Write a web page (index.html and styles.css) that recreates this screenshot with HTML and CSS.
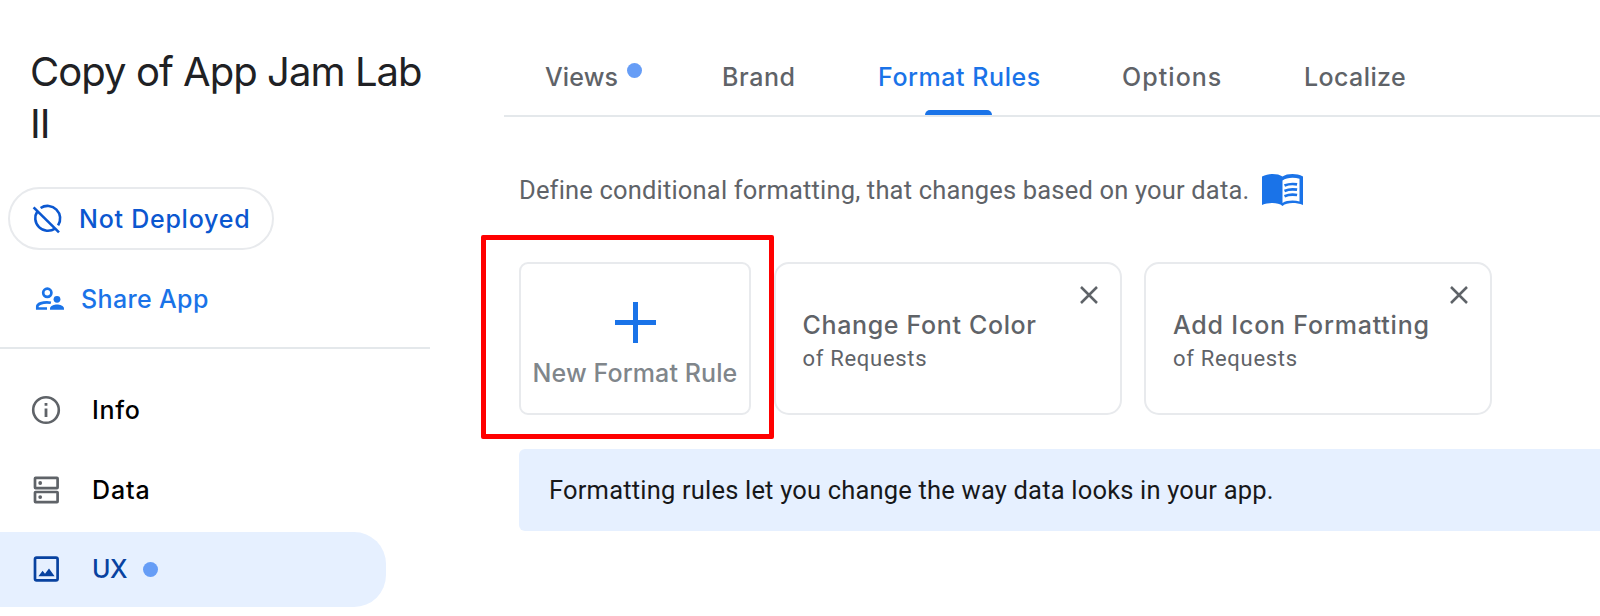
FILE: index.html
```html
<!DOCTYPE html>
<html lang="en">
<head>
<meta charset="utf-8">
<title>Copy of App Jam Lab II</title>
<link rel="stylesheet" href="styles.css">
</head>
<body>
<div class="app">
  <aside class="sidebar">
    <h1 class="app-title">Copy of App Jam Lab II</h1>
    <div class="pill">
      <svg class="icon" viewBox="0 0 34 34" fill="none" stroke="currentColor" stroke-width="2.6">
        <path d="M3.6 5.4 29 30.4"/>
        <path d="M10.6 6A12.6 12.6 0 0 1 28.1 23.4"/>
        <path d="M7.4 9.2A12.6 12.6 0 0 0 25 26.6"/>
      </svg>
      <span class="t-pill">Not Deployed</span>
    </div>
    <div class="share">
      <svg class="icon" viewBox="0 0 34 34" fill="currentColor">
        <circle cx="17.3" cy="10.8" r="4.1" fill="none" stroke="currentColor" stroke-width="2.7"/>
        <path d="M17 26.5H7.3v-2c0-2.7 5.6-4.2 9.6-4.2 1.4 0 2.7.2 4 .5" fill="none" stroke="currentColor" stroke-width="2.7"/>
        <circle cx="27" cy="17.3" r="3.4"/>
        <path d="M20 27.8v-1.400c0-2.700 4.400-3.900 7-3.900s7 1.200 7 3.900v1.400z"/>
      </svg>
      <span class="t-share">Share App</span>
    </div>
    <nav class="nav">
      <div class="nav-item">
        <svg class="icon" viewBox="0 0 34 34" fill="none" stroke="currentColor">
          <circle cx="17" cy="17" r="12.8" stroke-width="2.6"/>
          <path d="M17 15.6V24M17 10v2.8" stroke-width="2.8"/>
        </svg>
        <span class="t-info">Info</span>
      </div>
      <div class="nav-item">
        <svg class="icon" viewBox="0 0 34 34" fill="none" stroke="currentColor" stroke-width="2.7">
          <rect x="6" y="4.9" width="22.6" height="10.2" rx=".6"/>
          <rect x="6" y="19" width="22.6" height="10.2" rx=".6"/>
          <circle cx="11.2" cy="10" r="1.9" fill="currentColor" stroke="none"/>
          <circle cx="11.2" cy="24.1" r="1.9" fill="currentColor" stroke="none"/>
        </svg>
        <span class="t-data">Data</span>
      </div>
      <div class="nav-item active">
        <svg class="icon" viewBox="0 0 34 34">
          <rect x="6" y="5.7" width="22.6" height="22.6" rx="1.6" fill="none" stroke="currentColor" stroke-width="2.7"/>
          <path d="M9.4 24.2l4.200-5.400 2.400 3 4-5.200 5.600 7.600z" fill="currentColor"/>
        </svg>
        <span class="t-ux">UX</span>
        <i class="dot"></i>
      </div>
    </nav>
  </aside>
  <main class="main">
    <div class="tabs">
      <div class="tab"><span class="t-views">Views</span><i class="dot raised"></i></div>
      <div class="tab"><span class="t-brand">Brand</span></div>
      <div class="tab selected"><span class="t-format">Format Rules</span></div>
      <div class="tab"><span class="t-options">Options</span></div>
      <div class="tab"><span class="t-localize">Localize</span></div>
    </div>
    <div class="content">
      <div class="intro">
        <span>Define conditional formatting, that changes based on your data.</span>
        <svg class="book" viewBox="0 0 41 32">
          <path fill="currentColor" d="M0 2.5C3.5.7 7 0 10.500 0c4 0 7.600.8 10 2.600C23 .8 26.500 0 30.500 0 34 0 37.500.7 41 2.500V31c-3.500-1.300-7-1.900-10.500-1.900-4 0-7.500.9-10 2.900-2.400-2-6-2.900-10-2.900C7 29.100 3.500 29.700 0 31z"/>
          <path fill="#fff" d="M20.500 6.600c2.500-1.900 6-2.800 10-2.800 2.500 0 4.900.3 7 1v22.700c-2.100-.6-4.500-.9-7-.9-4 0-7.500.7-10 2.300z"/>
          <path fill="none" stroke="currentColor" stroke-width="2.700" d="M22.500 11.600c3.500-1.500 8-2 12.600-1.200M22.500 16.900c3.500-1.500 8-2 12.600-1.200M22.500 22.200c3.500-1.500 8-2 12.600-1.200"/>
        </svg>
      </div>
      <div class="cards">
        <div class="new-card">
          <svg class="plus" viewBox="0 0 41 41"><path d="M20.500 0v41M0 20.500h41" stroke="currentColor" stroke-width="5"/></svg>
          <span class="t-new">New Format Rule</span>
        </div>
        <div class="rule-card">
          <div class="rule-name t-change">Change Font Color</div>
          <div class="rule-table">of Requests</div>
          <svg class="close" viewBox="0 0 18 18"><path d="M1 1l16 16M17 1 1 17" stroke="currentColor" stroke-width="2.500"/></svg>
        </div>
        <div class="rule-card">
          <div class="rule-name t-add">Add Icon Formatting</div>
          <div class="rule-table">of Requests</div>
          <svg class="close" viewBox="0 0 18 18"><path d="M1 1l16 16M17 1 1 17" stroke="currentColor" stroke-width="2.500"/></svg>
        </div>
        <div class="highlight"></div>
      </div>
      <div class="banner">Formatting rules let you change the way data looks in your app.</div>
    </div>
  </main>
</div>
</body>
</html>
```

FILE: styles.css
```css
* { box-sizing: border-box; }
body {
  margin: 0;
  background: #fff;
  color: #5f6368;
  font: 480 25px/34px Inter, "Liberation Sans", sans-serif;
  white-space: nowrap;
}
svg { display: block; flex: none; }
.app { display: flex; height: 616px; overflow: hidden; }

/* Sidebar */
.sidebar { width: 430px; flex: none; padding-top: 46px; }
.app-title {
  margin: 0 0 37px;
  padding-left: 30px;
  color: #202124;
  font-size: 40px;
  font-weight: 400;
  line-height: 52px;
  letter-spacing: -0.95px;
  white-space: normal;
}
.icon { width: 34px; height: 34px; }
.pill {
  display: flex;
  align-items: center;
  gap: 14px;
  width: 266px;
  height: 63px;
  margin-left: 8px;
  padding-left: 21px;
  border: 2px solid #e8eaed;
  border-radius: 32px;
  color: #0b57d0;
}
.pill .icon { margin-left: -1px; margin-right: 1px; }
.share {
  display: flex;
  align-items: center;
  gap: 17px;
  height: 99px;
  padding-left: 30px;
  border-bottom: 2px solid #e4e8eb;
  color: #1a73e8;
}
.nav { display: grid; gap: 5px; padding-top: 24px; }
.nav-item {
  display: flex;
  align-items: center;
  width: 386px;
  height: 74.5px;
  padding-left: 29px;
  border-radius: 0 32px 32px 0;
}
.nav-item span { margin-left: 29px; color: #000; }
.nav-item.active { background: #e6f0ff; color: #0842a0; }
.nav-item.active span { color: #0842a0; }
.nav-item .dot { margin-left: 16px; }
.dot { width: 15px; height: 15px; border-radius: 50%; background: #669df6; }

/* Tabs */
.main { width: 1096px; flex: none; margin-left: 74px; }
.tabs {
  display: grid;
  grid-template-columns: 177px 156px 244px 182px auto;
  height: 117px;
  padding: 60px 0 0 41px;
  border-bottom: 2px solid #e4e8eb;
}
.tab { display: flex; align-items: flex-start; }
.dot.raised { margin: 3px 0 0 9px; }
.tab.selected { color: #1a73e8; }
.tab.selected span { position: relative; height: 55px; }
.tab.selected span::after {
  content: "";
  position: absolute;
  left: calc(50% - 34px);
  bottom: 0;
  width: 67px;
  height: 5.5px;
  border-radius: 5px 5px 0 0;
  background: #1a73e8;
}

/* Content */
.content { padding: 50px 0 0 15px; }
.intro {
  display: flex;
  align-items: center;
  gap: 12.5px;
  height: 45px;
  font: 400 25.5px/34px Roboto, sans-serif;
  letter-spacing: 0.18px;
}
.book { width: 41px; height: 32px; color: #1a73e8; }
.cards { position: relative; display: flex; margin-top: 50px; }
.new-card {
  display: flex;
  flex-direction: column;
  align-items: center;
  gap: 13px;
  width: 232px;
  height: 153px;
  padding-top: 38px;
  border: 2px solid #e8eaed;
  border-radius: 9px;
  color: #80868b;
}
.plus { width: 41px; height: 41px; color: #1a73e8; }
.rule-card {
  position: relative;
  width: 348px;
  height: 153px;
  margin-left: 22.5px;
  padding: 44px 27px 0;
  border: 2px solid #e8eaed;
  border-radius: 15px;
}
.rule-table {
  margin-top: 2px;
  font: 400 22px/30px Roboto, sans-serif;
  letter-spacing: 0.7px;
}
.close { position: absolute; top: 22px; right: 22px; width: 18px; height: 18px; }
.highlight {
  position: absolute;
  left: -38px;
  top: -27px;
  width: 293px;
  height: 204px;
  border: 5px solid #f00;
  border-radius: 2px;
}
.banner {
  height: 82px;
  margin-top: 34px;
  padding-left: 30px;
  border-radius: 6px 0 0 6px;
  background: #e6f0ff;
  color: #17181a;
  font: 400 25.5px/82px Roboto, sans-serif;
  letter-spacing: 0.19px;
}

/* Label tracking */
.t-pill { letter-spacing: 0.75px; }
.t-share { letter-spacing: 0.35px; }
.t-info { letter-spacing: 0.7px; }
.t-data { letter-spacing: 0.9px; }
.t-ux { letter-spacing: -0.4px; }
.t-views { letter-spacing: 0.15px; }
.t-brand { letter-spacing: 0.6px; }
.t-format { letter-spacing: 0.55px; }
.t-options { letter-spacing: 1.05px; }
.t-localize { letter-spacing: 0.4px; }
.t-new { letter-spacing: 0.1px; }
.t-change { letter-spacing: 0.65px; }
.t-add { letter-spacing: 0.8px; }
```
